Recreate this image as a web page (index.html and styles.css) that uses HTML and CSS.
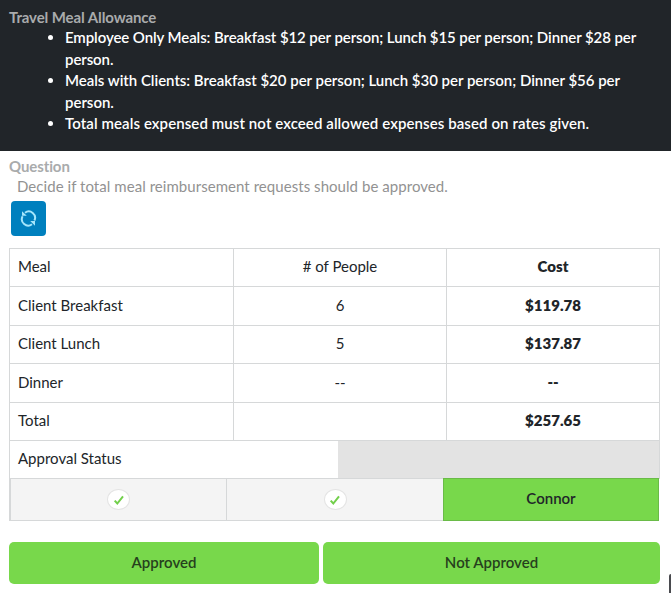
FILE: index.html
```html
<!DOCTYPE html>
<html lang="en">
<head>
<meta charset="utf-8">
<title>Travel Meal Allowance</title>
<link rel="stylesheet" href="styles.css">
</head>
<body>
<section class="rules">
  <h2 class="label">Travel Meal Allowance</h2>
  <ul class="rule-list">
    <li class="tight">Employee Only Meals: Breakfast $12 per person; Lunch $15 per person; Dinner $28 per<br>person.</li>
    <li class="snug">Meals with Clients: Breakfast $20 per person; Lunch $30 per person; Dinner $56 per<br>person.</li>
    <li class="loose">Total meals expensed must not exceed allowed expenses based on rates given.</li>
  </ul>
</section>
<main class="question">
  <h2 class="label">Question</h2>
  <p class="prompt">Decide if total meal reimbursement requests should be approved.</p>
  <button class="refresh" aria-label="Refresh">
    <svg width="17" height="17" viewBox="0 0 17 17" fill="none" stroke="#a5e6fb" stroke-width="2">
      <path d="M5 2.7A6.3 6.3 0 0 1 14.4 10.5M12 14.2A6.3 6.3 0 0 1 2.6 6.3"/>
      <path d="M2 1.2V5.8H6.8ZM15 15.7V11.1H10.2Z" fill="#a5e6fb" stroke="none"/>
    </svg>
  </button>
  <div class="sheet">
    <div class="row"><span>Meal</span><span># of People</span><b>Cost</b></div>
    <div class="row"><span>Client Breakfast</span><span>6</span><b>$119.78</b></div>
    <div class="row"><span>Client Lunch</span><span>5</span><b>$137.87</b></div>
    <div class="row"><span>Dinner</span><span>--</span><b>--</b></div>
    <div class="row"><span>Total</span><span></span><b>$257.65</b></div>
    <div class="status"><span>Approval Status</span><i></i></div>
  </div>
  <div class="steps">
    <div class="step"><span class="check"><svg width="12" height="12" viewBox="0 0 12 12"><path d="M1.7 6.6 4.3 9.5 10 2.3" fill="none" stroke="#72cf4b" stroke-width="2"/></svg></span></div>
    <div class="step"><span class="check"><svg width="12" height="12" viewBox="0 0 12 12"><path d="M1.7 6.6 4.3 9.5 10 2.3" fill="none" stroke="#72cf4b" stroke-width="2"/></svg></span></div>
    <div class="step current">Connor</div>
  </div>
  <div class="actions">
    <button class="approve">Approved</button>
    <button class="reject">Not Approved</button>
  </div>
</main>
<div class="edge-tab"></div>
</body>
</html>
```
FILE: styles.css
```css
* { box-sizing: border-box; }
body {
  margin: 0;
  height: 593px;
  overflow: hidden;
  background: #fff;
  color: #212529;
  font: 15px/21.5px Lato, "Open Sans", sans-serif;
  white-space: nowrap;
}
button { border: 0; padding: 0; font: inherit; color: inherit; }
.rules { height: 151px; padding: 7px 9px 0; background: #212529; color: #fff; }
.label { margin: 0; font-size: 15px; line-height: 20px; font-weight: 700; letter-spacing: -0.1px; color: #a9abac; }
.rule-list { margin: 0; padding-left: 56px; font-weight: 600; }
.tight { letter-spacing: -0.09px; }
.snug { letter-spacing: -0.025px; }
.loose { letter-spacing: 0.09px; }
.question { padding: 5px 11px 0 9px; }
.prompt { margin: 0 0 4px 8px; line-height: 21px; letter-spacing: 0.05px; color: #929292; }
.refresh {
  display: grid;
  place-items: center;
  width: 35px;
  height: 35px;
  margin-left: 2px;
  border-radius: 4px;
  background: #0080be;
}
.sheet {
  display: grid;
  grid-template-rows: 38px 39px 38px 39px 38px 38px;
  width: 651px;
  margin-top: 12px;
  border: solid #d6d8d9;
  border-width: 1px 1px 0;
}
.row { display: grid; grid-template-columns: 223px 213px 1fr; border-bottom: 1px solid #d6d8d9; }
.row > * { display: flex; align-items: center; justify-content: center; padding-bottom: 1px; }
.row > * + * { border-left: 1px solid #d6d8d9; }
.row > :first-child { justify-content: flex-start; padding-left: 8px; }
.row b { font-weight: 800; }
.status { display: flex; }
.status span { width: 328px; padding: 7px 8px; }
.status i { flex: 1; background: #e3e3e3; }
.steps { display: grid; grid-template-columns: 217px 217px 216px; width: 650px; height: 43px; margin-top: -1px; }
.step { display: grid; place-items: center; border: 1px solid #d6d8d9; border-right: 0; background: #f4f4f4; }
.step:first-child { border-left-width: 2px; }
.check {
  display: grid;
  place-items: center;
  width: 23px;
  height: 21px;
  border: 1px solid #e4e4e4;
  border-radius: 50%;
  background: #fff;
}
.step.current { padding-bottom: 2px; border: 1px solid #6abb48; background: #78d84b; font-weight: 600; }
.actions { display: grid; grid-template-columns: 310px 337px; gap: 4px; margin-top: 21px; }
.actions button { height: 42px; border-radius: 5px; background: #78d84b; color: #26401d; font-weight: 600; }
.edge-tab { position: absolute; right: 0; bottom: 0; width: 2px; height: 19px; border-radius: 2px 0 0 0; background: #4a4b4f; }
```
